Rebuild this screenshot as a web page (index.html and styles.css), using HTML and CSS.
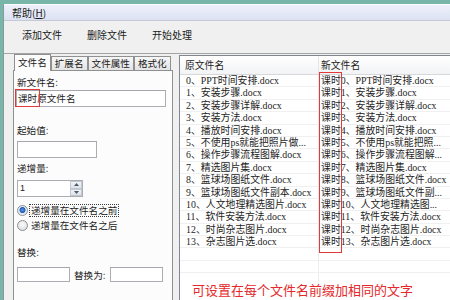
FILE: index.html
```html
<!DOCTYPE html>
<html lang="zh-CN">
<head>
<meta charset="utf-8">
<title>批量重命名</title>
<link rel="stylesheet" href="styles.css">
</head>
<body>
<div class="app">
  <div class="win">
    <div class="menubar"><span>帮助(<u>H</u>)</span></div>
    <div class="toolbar"><span>添加文件</span><span>删除文件</span><span>开始处理</span></div>
    <div class="main">
      <div class="left">
        <div class="tabs">
          <div class="tab active">文件名</div>
          <div class="tab">扩展名</div>
          <div class="tab">文件属性</div>
          <div class="tab">格式化</div>
        </div>
        <div class="panel">
          <div class="lbl l1">新文件名:</div>
          <div class="field wide">课时原文件名</div>
          <div class="lbl l2">起始值:</div>
          <div class="field mid"></div>
          <div class="lbl l3">递增量:</div>
          <div class="spin">
            <span class="spin-val">1</span>
            <span class="spin-btns">
              <span class="sb"><svg width="5" height="3" viewBox="0 0 5 3"><path d="M0 3L2.5 0L5 3Z" fill="#4d5a6a"/></svg></span>
              <span class="sb"><svg width="5" height="3" viewBox="0 0 5 3"><path d="M0 0L2.5 3L5 0Z" fill="#4d5a6a"/></svg></span>
            </span>
          </div>
          <div class="radio-row r1"><span class="radio on"></span><span class="rtext focus">递增量在文件名之前</span></div>
          <div class="radio-row r2"><span class="radio"></span><span class="rtext">递增量在文件名之后</span></div>
          <div class="lbl l4">替换:</div>
          <div class="replace">
            <div class="field small"></div>
            <span class="rlbl">替换为:</span>
            <div class="field small"></div>
          </div>
        </div>
      </div>
      <div class="list">
        <div class="lhead"><div class="c1">原文件名</div><div class="c2">新文件名</div></div>
        <div class="rows">
          <div class="row"><div class="c1">0、PPT时间安排.docx</div><div class="c2">课时0、PPT时间安排.docx</div></div>
          <div class="row"><div class="c1">1、安装步骤.docx</div><div class="c2">课时1、安装步骤.docx</div></div>
          <div class="row"><div class="c1">2、安装步骤详解.docx</div><div class="c2">课时2、安装步骤详解.docx</div></div>
          <div class="row"><div class="c1">3、安装方法.docx</div><div class="c2">课时3、安装方法.docx</div></div>
          <div class="row"><div class="c1">4、播放时间安排.docx</div><div class="c2">课时4、播放时间安排.docx</div></div>
          <div class="row"><div class="c1">5、不使用ps就能把照片做...</div><div class="c2">课时5、不使用ps就能把照...</div></div>
          <div class="row"><div class="c1">6、操作步骤流程图解.docx</div><div class="c2">课时6、操作步骤流程图解...</div></div>
          <div class="row"><div class="c1">7、精选图片集.docx</div><div class="c2">课时7、精选图片集.docx</div></div>
          <div class="row"><div class="c1">8、篮球场图纸文件.docx</div><div class="c2">课时8、篮球场图纸文件.docx</div></div>
          <div class="row"><div class="c1">9、篮球场图纸文件副本.docx</div><div class="c2">课时9、篮球场图纸文件副...</div></div>
          <div class="row"><div class="c1">10、人文地理精选图片.docx</div><div class="c2">课时10、人文地理精选图...</div></div>
          <div class="row"><div class="c1">11、软件安装方法.docx</div><div class="c2">课时11、软件安装方法.docx</div></div>
          <div class="row"><div class="c1">12、时尚杂志图片.docx</div><div class="c2">课时12、时尚杂志图片.docx</div></div>
          <div class="row"><div class="c1">13、杂志图片选.docx</div><div class="c2">课时13、杂志图片选.docx</div></div>
          <div class="row"><div class="c1"></div><div class="c2"></div></div>
          <div class="row"><div class="c1"></div><div class="c2"></div></div>
          <div class="row last"><div class="c1"></div><div class="c2"></div></div>
        </div>
      </div>
    </div>
  </div>
  <div class="mark mark-left"></div>
  <div class="mark mark-right"></div>
  <div class="note">可设置在每个文件名前缀加相同的文字</div>
</div>
</body>
</html>
```

FILE: styles.css
```css
* { box-sizing: border-box; margin: 0; padding: 0; }
html, body { width: 450px; height: 300px; overflow: hidden; }
body {
  font-family: "Noto Sans CJK SC", "Liberation Sans", sans-serif;
  font-size: 9.6px;
  color: #1b1b1b;
  background: #f0f0f0;
}
.app {
  position: relative;
  width: 450px;
  height: 300px;
  border-top: 4px solid #78b6aa;
  border-left: 3px solid #78b6aa;
  overflow: hidden;
}
.win {
  height: 100%;
  border-left: 1px solid #8a9a97;
  display: flex;
  flex-direction: column;
  background: #f0f0f0;
}
.menubar {
  height: 17px;
  flex: none;
  border-top: 1px solid #fbfcff;
  border-bottom: 1px solid #c4c9d5;
  background: linear-gradient(#eef1fa, #dce2f3);
  padding-left: 8px;
  line-height: 15px;
  font-size: 10px;
}
.menubar u { text-decoration: underline; }
.toolbar {
  height: 33px;
  flex: none;
  display: flex;
  gap: 25px;
  padding: 7px 0 0 18px;
  line-height: 14px;
  font-size: 10px;
  border-bottom: 1px solid #a5a5a5;
  background: #f0f0f0;
}
.main { flex: 1; display: flex; min-height: 0; }
.left {
  width: 160px;
  flex: none;
  margin-left: 9px;
  display: flex;
  flex-direction: column;
}
.tabs {
  height: 16px;
  flex: none;
  display: flex;
  align-items: flex-end;
  padding-left: 1px;
  position: relative;
  z-index: 1;
}
.tab {
  height: 14px;
  padding: 0 3px;
  border: 1px solid #8e9092;
  border-bottom: none;
  background: linear-gradient(#f6f6f6, #e4e4e4);
  line-height: 13px;
  white-space: nowrap;
}
.tab.active {
  height: 17px;
  margin-bottom: -1px;
  background: #fcfcfc;
  line-height: 15px;
}
.panel {
  flex: 1;
  border: 1px solid #8e9092;
  border-bottom: none;
  background: #fcfcfc;
  padding-left: 3px;
  display: flex;
  flex-direction: column;
  align-items: flex-start;
}
.lbl { line-height: 12px; height: 12px; }
.l1 { margin-top: 5px; }
.l2 { margin-top: 17px; }
.l3 { margin-top: 4px; }
.l4 { margin-top: 14px; }
.field {
  height: 17px;
  border: 1px solid #abadb3;
  border-top-color: #a3a6ad;
  background: #fff;
  line-height: 15px;
  padding-left: 1px;
}
.wide { width: 150px; margin-left: -1px; margin-top: 2px; }
.mid { width: 80px; margin-top: 5px; }
.spin {
  margin-top: 6px;
  width: 66px;
  height: 17px;
  border: 1px solid #abadb3;
  background: #fff;
  display: flex;
  justify-content: space-between;
}
.spin-val { padding-left: 2px; line-height: 15px; font-family: "Liberation Sans", sans-serif; font-size: 9px; }
.spin-btns {
  width: 12px;
  display: flex;
  flex-direction: column;
}
.sb {
  flex: 1;
  display: flex;
  align-items: center;
  justify-content: center;
  border: 1px solid #c3c8d0;
  background: linear-gradient(#f1f4f8, #dde3ea);
}
.sb svg { display: block; }
.radio-row {
  display: flex;
  align-items: center;
  height: 13px;
}
.r1 { margin-top: 7px; }
.r2 { margin-top: 2px; }
.radio {
  width: 11px;
  height: 11px;
  border-radius: 50%;
  border: 1px solid #8c8f93;
  background: radial-gradient(circle at 50% 40%, #fbfbfb, #d7d9dc);
  margin-right: 1px;
}
.radio.on {
  background: radial-gradient(circle at 50% 45%, #5d9ae6 0, #1d5cb6 2.6px, #e3e9f2 3.4px, #f3f5f8 100%);
}
.rtext {
  line-height: 11px;
  padding: 0 1px;
  border: 1px dotted transparent;
}
.rtext.focus { border-color: #3a3a3a; }
.replace {
  margin-top: 9px;
  display: flex;
  align-items: center;
  gap: 4px;
}
.small { width: 53px; height: 15px; }
.rlbl { margin-right: 1px; }
.list {
  flex: 1;
  margin-left: 6px;
  margin-top: 1px;
  border-left: 1px solid #82878f;
  border-top: 1px solid #82878f;
  background: #fff;
  overflow: hidden;
}
.lhead {
  display: flex;
  height: 19px;
  line-height: 18px;
  border-bottom: 1px solid #d6d8dc;
  background: linear-gradient(#ffffff, #f2f3f5);
  font-size: 9.8px;
}
.c1 {
  width: 139px;
  flex: none;
  padding-left: 5px;
  border-right: 1px solid #e4e5e7;
  white-space: nowrap;
  overflow: hidden;
}
.c2 {
  flex: 1;
  padding-left: 2px;
  white-space: nowrap;
  overflow: hidden;
}
.row {
  display: flex;
  height: 12.4px;
  line-height: 11.4px;
  border-bottom: 1px solid #f0f0f0;
  font-family: "Liberation Serif", "Noto Sans CJK SC", serif;
  font-size: 9.9px;
  color: #1e1e1e;
}
.row .c1 { padding-left: 6px; border-right-color: #ededed; }
.row.last { border-bottom: none; }
.mark {
  position: absolute;
  border: 1px solid #e2393b;
}
.mark-left { left: 12px; top: 85px; width: 25px; height: 18px; }
.mark-right { left: 316px; top: 68px; width: 23px; height: 181px; }
.note {
  position: absolute;
  left: 189px;
  top: 279px;
  font-size: 13px;
  line-height: 13px;
  color: #e4282b;
  white-space: nowrap;
}
```
